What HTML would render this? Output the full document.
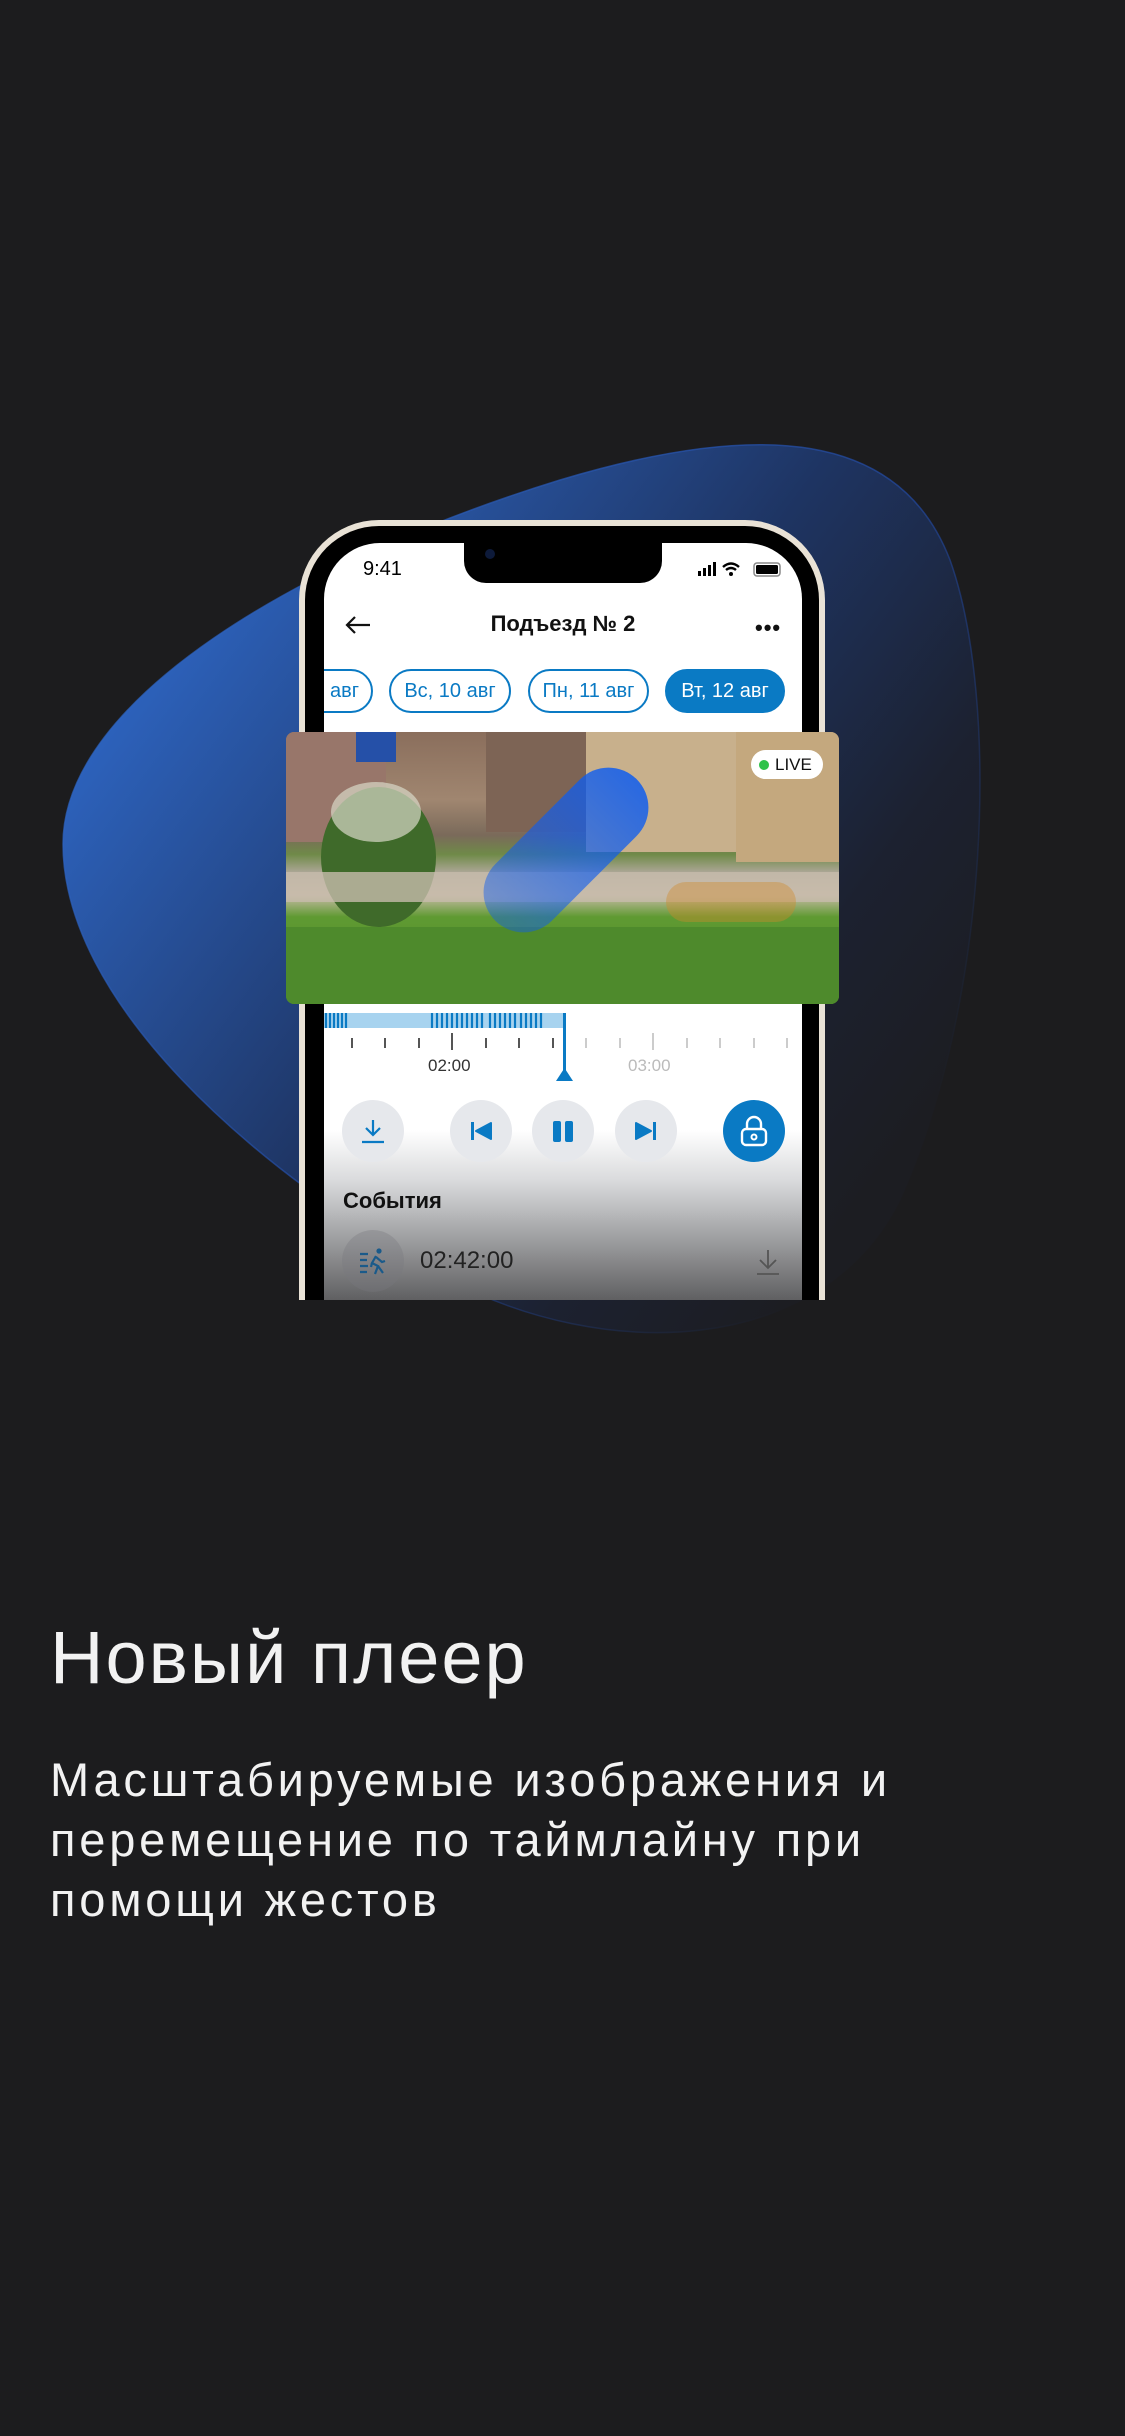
<!DOCTYPE html>
<html><head><meta charset="utf-8"><style>
*{margin:0;padding:0;box-sizing:border-box}
body{width:1125px;height:2436px;background:#1c1c1e;position:relative;overflow:hidden;font-family:"Liberation Sans","Noto Sans CJK SC",sans-serif}
.a{position:absolute}
.pill{position:absolute;top:669px;height:44px;border:2px solid #0a7ac4;border-radius:22px;color:#0a7ac4;font-size:20px;display:flex;align-items:center;justify-content:center}
.btn{position:absolute;top:1100px;width:62px;height:62px;border-radius:50%;background:#e6e8ec;display:flex;align-items:center;justify-content:center}
.tick{position:absolute;width:2px;background:#555;top:1038px;height:10px}
</style></head><body>
<svg class="a" style="left:0;top:0" width="1125" height="1500">
<defs><linearGradient id="g" x1="150" y1="600" x2="900" y2="1150" gradientUnits="userSpaceOnUse"><stop offset="0" stop-color="#2e66c4"/><stop offset="0.5" stop-color="#1e3462"/><stop offset="0.8" stop-color="#1c2130"/><stop offset="1" stop-color="#1c1d22"/></linearGradient>
<linearGradient id="s" x1="150" y1="600" x2="900" y2="1150" gradientUnits="userSpaceOnUse"><stop offset="0" stop-color="#2e66c4"/><stop offset="0.6" stop-color="#2248a0"/><stop offset="1" stop-color="#1c1d22"/></linearGradient></defs>
<path d="M63,844 C63,700 300,560 560,480 C760,420 900,430 950,560 C1000,700 990,1000 900,1200 C820,1360 600,1360 450,1280 C250,1170 63,1000 63,844 Z" fill="url(#g)" stroke="url(#s)" stroke-width="1.5" stroke-opacity="0.7"/>
</svg>
<!-- phone -->
<div class="a" style="left:299px;top:520px;width:526px;height:800px;border-radius:80px 80px 0 0;background:#e9e2d6;clip-path:inset(0 0 20px 0)"></div>
<div class="a" style="left:305px;top:526px;width:514px;height:774px;border-radius:74px 74px 0 0;background:#000"></div>
<div class="a" style="left:324px;top:543px;width:478px;height:757px;border-radius:56px 56px 0 0;background:#fff;overflow:hidden">
 <div class="a" style="left:0;top:587px;width:478px;height:170px;background:linear-gradient(#fff,#d9dadc 30%,#9c9d9f 65%,#606062)"></div>
 <div class="pill" style="left:-34px;top:126px;width:83px;justify-content:flex-end;padding-right:12px">авг</div>
</div>
<div class="a" style="left:464px;top:540px;width:198px;height:43px;background:#000;border-radius:0 0 22px 22px"></div>
<div class="a" style="left:485px;top:549px;width:10px;height:10px;border-radius:50%;background:#0d1a3a"></div>
<div class="a" style="left:363px;top:558px;font-size:20px;color:#000">9:41</div>
<svg class="a" style="left:698px;top:561px" width="86" height="18"><rect x="0" y="10" width="3" height="5" fill="#000"/><rect x="5" y="7" width="3" height="8" fill="#000"/><rect x="10" y="4" width="3" height="11" fill="#000"/><rect x="15" y="1" width="3" height="14" fill="#000"/><path d="M25,6 Q33,-1 41,6 M28,9 Q33,5 38,9" stroke="#000" stroke-width="2.4" fill="none"/><circle cx="33" cy="13" r="2" fill="#000"/><rect x="56" y="2" width="26" height="13" rx="3" fill="none" stroke="#888" stroke-width="1.5"/><rect x="58" y="4" width="22" height="9" rx="1.5" fill="#000"/></svg>
<svg class="a" style="left:344px;top:614px" width="28" height="22"><path d="M26,11 H3 M11,3 L3,11 L11,19" stroke="#111" stroke-width="2.2" fill="none"/></svg>
<div class="a" style="left:440px;top:611px;width:246px;text-align:center;font-size:22px;font-weight:bold;color:#111">Подъезд № 2</div>
<div class="a" style="left:755px;top:615px;font-size:22px;color:#111;font-weight:bold;letter-spacing:1px">•••</div>
<div class="pill" style="left:389px;width:122px">Вс, 10 авг</div>
<div class="pill" style="left:528px;width:121px">Пн, 11 авг</div>
<div class="pill" style="left:665px;width:120px;background:#0a7ac4;color:#fff">Вт, 12 авг</div>
<!-- video -->
<div class="a" style="left:286px;top:732px;width:553px;height:272px;border-radius:8px;overflow:hidden;background:linear-gradient(#8a6e5c 0%,#a08670 25%,#7a6a5a 38%,#6f8a48 45%,#b0a89a 52%,#c9bba8 60%,#5f9a32 68%,#4f8a2a 100%)">
 <div class="a" style="left:0;top:0;width:100px;height:110px;background:#98766a"></div>
 <div class="a" style="left:200px;top:0;width:110px;height:100px;background:#7d6455"></div>
 <div class="a" style="left:300px;top:0;width:150px;height:120px;background:#c8b08c"></div>
 <div class="a" style="left:450px;top:0;width:103px;height:130px;background:#c4a87e"></div>
 <div class="a" style="left:35px;top:55px;width:115px;height:140px;border-radius:50%;background:#3f6a2a"></div>
 <div class="a" style="left:45px;top:50px;width:90px;height:60px;border-radius:50%;background:#d8d8c8;opacity:.7"></div>
 <div class="a" style="left:70px;top:0;width:40px;height:30px;background:#2550a8"></div>
 <div class="a" style="left:0;top:140px;width:553px;height:30px;background:#c7bcab;opacity:.8"></div>
 <div class="a" style="left:380px;top:150px;width:130px;height:40px;background:#d08a2a;opacity:.4;border-radius:20px"></div>
 <div class="a" style="left:0;top:195px;width:553px;height:77px;background:#4e8a2c"></div>
 <div class="a" style="width:80px;height:200px;border-radius:40px;background:linear-gradient(#0d5cf0,rgba(13,92,240,.5));transform:rotate(45deg);transform-origin:40px 100px;left:240px;top:18px;opacity:.85"></div>
 <div class="a" style="left:465px;top:18px;width:72px;height:29px;border-radius:15px;background:#fff;font-size:17px;color:#111;display:flex;align-items:center;padding-left:8px"><span style="width:10px;height:10px;border-radius:50%;background:#2fc24a;margin-right:6px"></span>LIVE</div>
</div>
<!-- timeline -->
<div class="a" style="left:324px;top:1013px;width:240px;height:15px;background:#a7d3ef"></div>
<svg class="a" style="left:324px;top:1013px" width="240" height="15"><g stroke="#0a7ac4" stroke-width="2.2">
<path d="M2,0v15M6,0v15M10,0v15M14,0v15M18,0v15M22,0v15"/>
<path d="M108,0v15M113,0v15M118,0v15M123,0v15M128,0v15M133,0v15M138,0v15M143,0v15M148,0v15M153,0v15M158,0v15"/>
<path d="M166,0v15M171,0v15M176,0v15M181,0v15M186,0v15M191,0v15M197,0v15M202,0v15M207,0v15M212,0v15M217,0v15"/></g></svg>
<div class="tick" style="left:351px"></div><div class="tick" style="left:384px"></div><div class="tick" style="left:418px"></div><div class="tick" style="left:451px;top:1033px;height:17px"></div><div class="tick" style="left:485px"></div><div class="tick" style="left:518px"></div><div class="tick" style="left:552px"></div>
<div class="tick" style="left:585px;background:#ccc"></div><div class="tick" style="left:619px;background:#ccc"></div><div class="tick" style="left:652px;top:1033px;height:17px;background:#ccc"></div><div class="tick" style="left:686px;background:#ccc"></div><div class="tick" style="left:719px;background:#ccc"></div><div class="tick" style="left:753px;background:#ccc"></div><div class="tick" style="left:786px;background:#ccc"></div>
<div class="a" style="left:428px;top:1056px;font-size:17px;color:#333">02:00</div>
<div class="a" style="left:628px;top:1056px;font-size:17px;color:#bbb">03:00</div>
<div class="a" style="left:563px;top:1013px;width:3px;height:62px;background:#0a7ac4"></div>
<svg class="a" style="left:556px;top:1068px" width="17" height="13"><path d="M8.5,0 L17,13 H0Z" fill="#0a7ac4"/></svg>
<!-- buttons -->
<div class="btn" style="left:342px"><svg width="28" height="28"><path d="M14,3v15M7,11l7,7 7-7M3,25h22" stroke="#0a7ac4" stroke-width="2.2" fill="none"/></svg></div>
<div class="btn" style="left:450px"><svg width="28" height="28"><rect x="4" y="5" width="3" height="18" fill="#0a7ac4"/><path d="M24,6 L9,14 L24,22Z" fill="#0a7ac4" stroke="#0a7ac4" stroke-width="2" stroke-linejoin="round"/></svg></div>
<div class="btn" style="left:532px"><svg width="28" height="28"><rect x="4" y="4" width="8" height="21" rx="2" fill="#0a7ac4"/><rect x="16" y="4" width="8" height="21" rx="2" fill="#0a7ac4"/></svg></div>
<div class="btn" style="left:615px"><svg width="28" height="28"><rect x="21" y="5" width="3" height="18" fill="#0a7ac4"/><path d="M4,6 L19,14 L4,22Z" fill="#0a7ac4" stroke="#0a7ac4" stroke-width="2" stroke-linejoin="round"/></svg></div>
<div class="btn" style="left:723px;background:#0a7ac4"><svg width="32" height="34"><path d="M9,15V10a7,7 0 0 1 14,0v5" stroke="#fff" stroke-width="2.4" fill="none"/><rect x="4" y="15" width="24" height="16" rx="4" stroke="#fff" stroke-width="2.4" fill="none"/><circle cx="16" cy="23" r="2.5" stroke="#fff" stroke-width="2" fill="none"/></svg></div>
<div class="a" style="left:343px;top:1188px;font-size:22px;font-weight:bold;color:#111">События</div>
<div class="a" style="left:342px;top:1230px;width:62px;height:62px;border-radius:50%;background:rgba(120,120,125,.35)"></div>
<svg class="a" style="left:358px;top:1246px" width="30" height="30"><g stroke="#1a5a8a" stroke-width="2.2" fill="none"><path d="M2,8h8M2,14h7M2,20h8M2,26h7"/><path d="M18,10 L14,17 L20,20 L17,28 M14,17 L13,21 M18,11 L24,16 L27,15 M20,20 L25,27"/></g><circle cx="21" cy="5" r="2.6" fill="#1a5a8a"/></svg>
<div class="a" style="left:420px;top:1247px;font-size:24px;color:#222">02:42:00</div>
<svg class="a" style="left:755px;top:1248px" width="26" height="28"><path d="M13,2v18M5,12l8,8 8-8M2,26h22" stroke="#555" stroke-width="1.8" fill="none"/></svg>
<!-- text -->
<div class="a" style="left:50px;top:1615px;font-size:74px;color:#f2f2f2;letter-spacing:2px">Новый плеер</div>
<div class="a" style="left:50px;top:1750px;font-size:47px;line-height:60px;color:#f2f2f2;width:1075px;letter-spacing:3.8px;white-space:nowrap">Масштабируемые изображения и<br>перемещение по таймлайну при<br>помощи жестов</div>
</body></html>
